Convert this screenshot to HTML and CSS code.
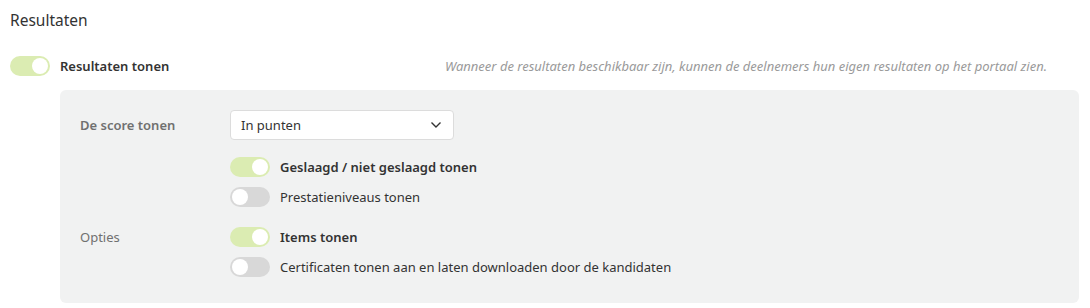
FILE: index.html
```html
<!DOCTYPE html>
<html lang="nl">
<head>
    <meta charset="UTF-8">
    <title>Resultaten</title>
    <link rel="stylesheet" href="styles.css">
</head>
<body>
    <div class="section">
        <h2 class="section-title">Resultaten</h2>

        <div class="main-row">
            <label class="switch-line">
                <span class="switch on"><span class="knob"></span></span>
                <span class="switch-text strong">Resultaten tonen</span>
            </label>
            <div class="hint">Wanneer de resultaten beschikbaar zijn, kunnen de deelnemers hun eigen resultaten op het portaal zien.</div>
        </div>

        <div class="panel">
            <div class="field">
                <div class="field-label strong">De score tonen</div>
                <div class="field-controls">
                    <div class="select">
                        <span>In punten</span>
                        <svg class="chevron" width="12" height="8" viewBox="0 0 12 8">
                            <path d="M1.5 1.5 L6 6 L10.5 1.5" fill="none" stroke="#333" stroke-width="1.4"/>
                        </svg>
                    </div>
                    <div class="switch-list first">
                        <label class="switch-line">
                            <span class="switch on"><span class="knob"></span></span>
                            <span class="switch-text strong">Geslaagd / niet geslaagd tonen</span>
                        </label>
                        <label class="switch-line">
                            <span class="switch"><span class="knob"></span></span>
                            <span class="switch-text">Prestatieniveaus tonen</span>
                        </label>
                    </div>
                </div>
            </div>

            <div class="field">
                <div class="field-label">Opties</div>
                <div class="field-controls">
                    <div class="switch-list">
                        <label class="switch-line">
                            <span class="switch on"><span class="knob"></span></span>
                            <span class="switch-text strong">Items tonen</span>
                        </label>
                        <label class="switch-line">
                            <span class="switch"><span class="knob"></span></span>
                            <span class="switch-text">Certificaten tonen aan en laten downloaden door de kandidaten</span>
                        </label>
                    </div>
                </div>
            </div>
        </div>
    </div>
</body>
</html>
```

FILE: styles.css
```css
body {
    margin: 0;
    background-color: #fff;
    font-family: "Segoe UI", "Noto Sans", "Open Sans", sans-serif;
    font-size: 13px;
    color: #333;
}

.section {
    padding: 9px 11px 0 10px;
}

.section-title {
    margin: 0;
    font-size: 15.5px;
    font-weight: 400;
    line-height: 22px;
    color: #333;
}

.main-row {
    display: flex;
    justify-content: space-between;
    align-items: center;
    margin-top: 25px;
    height: 20px;
    padding-right: 32px;
}

.hint {
    font-size: 13px;
    font-style: italic;
    color: #9a9a9a;
}

.strong {
    font-weight: 600;
}

.switch-line {
    display: flex;
    align-items: center;
    gap: 10px;
    height: 20px;
}

.switch {
    position: relative;
    display: inline-block;
    width: 40px;
    height: 20px;
    border-radius: 10px;
    background-color: #d8d8d8;
    flex-shrink: 0;
}

.switch.on {
    background-color: #dbecb2;
}

.knob {
    position: absolute;
    top: 2px;
    left: 2px;
    width: 16px;
    height: 16px;
    border-radius: 50%;
    background-color: #fff;
}

.switch.on .knob {
    left: 22px;
}

.switch-text {
    color: #333;
}

.panel {
    margin: 14px 0 0 50px;
    padding: 20px 20px 26px 20px;
    background-color: #f1f2f2;
    border-radius: 6px;
}

.field {
    display: grid;
    grid-template-columns: 150px 1fr;
}

.field + .field {
    margin-top: 20px;
}

.field-label {
    color: #707070;
    line-height: 30px;
}

.field + .field .field-label {
    line-height: 20px;
}

.select {
    display: flex;
    align-items: center;
    justify-content: space-between;
    width: 224px;
    height: 30px;
    box-sizing: border-box;
    padding: 0 11px 0 10px;
    background-color: #fff;
    border: 1px solid #dcdcdc;
    border-radius: 4px;
    color: #333;
}

.switch-list {
    display: flex;
    flex-direction: column;
    gap: 10px;
}

.switch-list.first {
    margin-top: 17px;
}
```
